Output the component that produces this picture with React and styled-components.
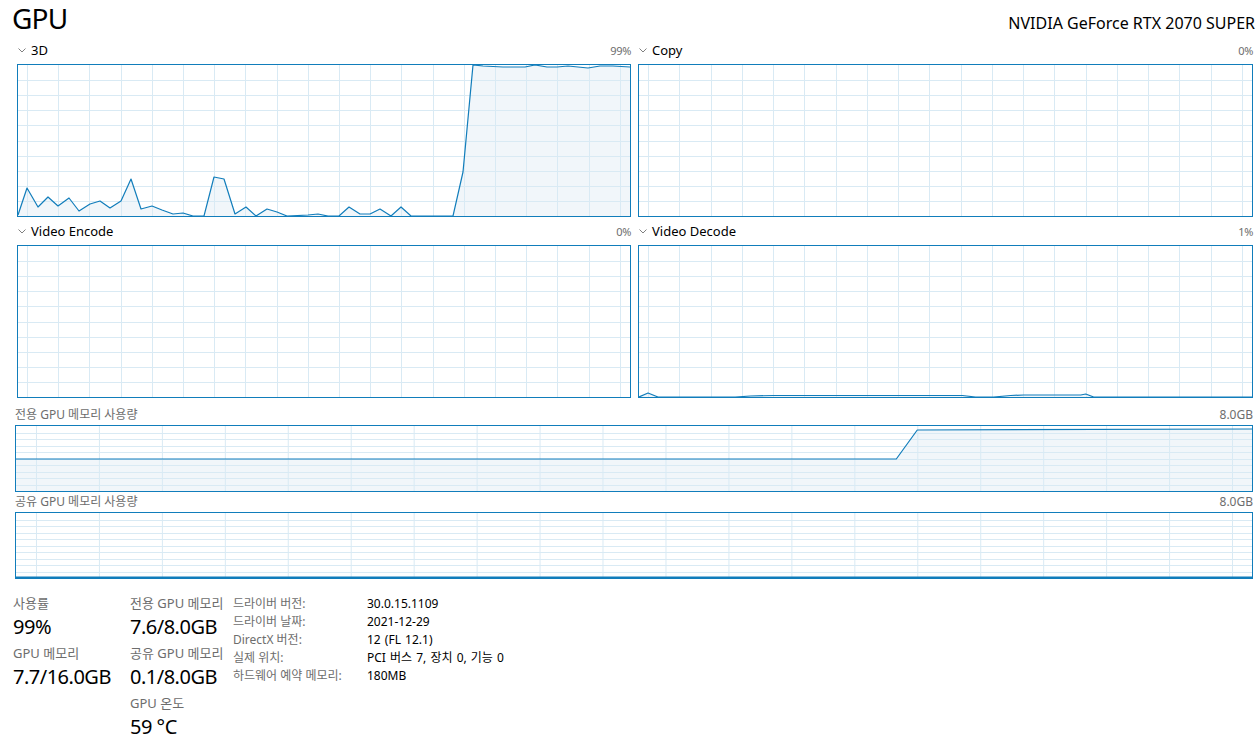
import React from 'react';
import styled, { createGlobalStyle } from 'styled-components';

const GlobalStyle = createGlobalStyle`
  html, body {
    margin: 0;
    padding: 0;
    background: #ffffff;
  }
  body {
    font-family: "Noto Sans", "Noto Sans CJK KR", sans-serif;
    color: #000;
  }
`;

const LINE = '#117dbb';
const GRID = '#d9eaf4';
const FILL = '#f1f6fa';

// chart data in local pixel coords of the inner plot area
const threeD = [
  [18, 215], [27, 188], [38, 207], [48, 197], [58, 206], [69, 198], [79, 211], [90, 204],
  [100, 201], [110, 208], [121, 201], [131, 179], [141, 209], [152, 206], [162, 210],
  [173, 214], [183, 213], [193, 216], [204, 216], [214, 177], [224, 179], [235, 214],
  [246, 207], [256, 216], [267, 209], [277, 212], [287, 216], [308, 215], [318, 214],
  [328, 216], [339, 216], [349, 207], [360, 214], [370, 214], [380, 209], [391, 216],
  [401, 207], [411, 216], [453, 216], [463, 172], [473, 65], [483, 66], [503, 67],
  [525, 67], [535, 65], [547, 67], [557, 67], [568, 66], [588, 68], [600, 66],
  [613, 66], [630, 67],
].map(([x, y]) => [x - 18, y - 65]);

const videoDecode = [
  [639, 397], [648, 393], [658, 397], [735, 397], [750, 396], [773, 395.5], [962, 395.5],
  [975, 397], [993, 397], [1010, 395.5], [1023, 395], [1080, 395], [1085, 394],
  [1093, 397], [1252, 397],
].map(([x, y]) => [x - 639, y - 246]);

const dedicated = [[0, 33], [881, 33], [902, 4], [1237, 3]];
const shared = [[0, 64.5], [1237, 64.5]];

const Page = styled.div`
  width: 1260px;
  height: 735px;
  overflow: hidden;
  box-sizing: border-box;
  padding: 0 6px 0 12px;
`;

const Header = styled.div`
  display: flex;
  justify-content: space-between;
  align-items: baseline;
  height: 41px;
`;

const Title = styled.h1`
  margin: 0;
  font-size: 28px;
  font-weight: 400;
  line-height: 36px;
  letter-spacing: -0.8px;
`;

const DeviceName = styled.div`
  font-size: 16px;
  letter-spacing: 0;
  margin-right: -1px;
`;

const EngineGrid = styled.div`
  display: grid;
  grid-template-columns: 614px 615px;
  column-gap: 7px;
  row-gap: 5px;
  margin-left: 5px;
`;

const LabelRow = styled.div`
  display: flex;
  justify-content: space-between;
  align-items: center;
  height: ${p => p.$h}px;
  margin-bottom: ${p => p.$gap}px;
`;

const EngineName = styled.div`
  display: flex;
  align-items: center;
  gap: 5px;
  font-size: 13px;
  color: #000;
  padding-left: 1px;
`;

const SmallValue = styled.span`
  font-size: 11px;
  color: #6d6d6d;
  letter-spacing: -0.3px;
`;

const MemLabel = styled.span`
  font-size: 12px;
  color: #6d6d6d;
`;

const ChartBox = styled.div`
  border: 1px solid ${LINE};
  height: ${p => p.$h}px;
  background: #fff;
  svg {
    display: block;
    width: 100%;
    height: 100%;
  }
`;

const MemSection = styled.div`
  margin: 8px 1px 0 3px;
`;

const MemBlock = styled.div`
  margin-bottom: 1px;
`;

const Stats = styled.div`
  display: flex;
  margin-top: 15px;
  margin-left: 1px;
`;

const StatCol = styled.div`
  width: ${p => p.$w}px;
`;

const Stat = styled.div`
  margin-bottom: 2px;
`;

const StatLabel = styled.div`
  font-size: 13px;
  line-height: 18px;
  color: #6d6d6d;
`;

const StatValue = styled.div`
  font-size: 20px;
  line-height: 30px;
  color: #000;
  letter-spacing: -0.5px;
`;

const InfoTable = styled.div`
  display: grid;
  grid-template-columns: 134px auto;
  grid-auto-rows: 18px;
  align-items: center;
  font-size: 12px;
`;

const InfoKey = styled.span`
  color: #6d6d6d;
`;

const InfoVal = styled.span`
  color: #000;
  word-spacing: 1px;
`;

const Chevron = () => (
  <svg width="8" height="5" viewBox="0 0 8 5">
    <polyline points="0.5,0.5 4,4 7.5,0.5" fill="none" stroke="#808080" strokeWidth="1" />
  </svg>
);

const Plot = ({ w, h, cols, offset, data, thick }) => {
  const vLines = [];
  for (let x = offset; x < w; x += cols) vLines.push(x);
  const hLines = [];
  for (let i = 1; i < 10; i++) hLines.push((h / 10) * i);
  const line = data ? data.map(p => p.join(',')).join(' ') : null;
  const area = data ? `0,${h} ${line} ${w},${h}` : null;
  return (
    <svg viewBox={`0 0 ${w} ${h}`} preserveAspectRatio="none" shapeRendering="crispEdges">
      {area && <polygon points={area} fill={FILL} stroke="none" />}
      {vLines.map(x => (
        <line key={'v' + x} x1={x + 0.5} x2={x + 0.5} y1={0} y2={h} stroke={GRID} strokeWidth="1" />
      ))}
      {hLines.map(y => (
        <line key={'h' + y} x1={0} x2={w} y1={Math.round(y) + 0.5} y2={Math.round(y) + 0.5} stroke={GRID} strokeWidth="1" />
      ))}
      {line && (
        <polyline points={line} fill="none" stroke={LINE} strokeWidth={thick || 1.2} shapeRendering="auto" strokeLinejoin="round" />
      )}
    </svg>
  );
};

const engines = [
  { name: '3D', value: '99%', data: threeD },
  { name: 'Copy', value: '0%' },
  { name: 'Video Encode', value: '0%' },
  { name: 'Video Decode', value: '1%', data: videoDecode },
];

const App = () => {
  return (
    <Page>
      <GlobalStyle />
      <Header>
        <Title>GPU</Title>
        <DeviceName>NVIDIA GeForce RTX 2070 SUPER</DeviceName>
      </Header>

      <EngineGrid>
        {engines.map(e => (
          <div key={e.name}>
            <LabelRow $h={18} $gap={5}>
              <EngineName>
                <Chevron />
                {e.name}
              </EngineName>
              <SmallValue>{e.value}</SmallValue>
            </LabelRow>
            <ChartBox $h={151}>
              <Plot w={612} h={151} cols={31.2} offset={9} data={e.data} />
            </ChartBox>
          </div>
        ))}
      </EngineGrid>

      <MemSection>
        <MemBlock>
          <LabelRow $h={16} $gap={3}>
            <MemLabel>전용 GPU 메모리 사용량</MemLabel>
            <MemLabel>8.0GB</MemLabel>
          </LabelRow>
          <ChartBox $h={65}>
            <Plot w={1237} h={65} cols={63} offset={20} data={dedicated} />
          </ChartBox>
        </MemBlock>
        <MemBlock>
          <LabelRow $h={16} $gap={3}>
            <MemLabel>공유 GPU 메모리 사용량</MemLabel>
            <MemLabel>8.0GB</MemLabel>
          </LabelRow>
          <ChartBox $h={65}>
            <Plot w={1237} h={65} cols={63} offset={20} data={shared} thick={2} />
          </ChartBox>
        </MemBlock>
      </MemSection>

      <Stats>
        <StatCol $w={117}>
          <Stat>
            <StatLabel>사용률</StatLabel>
            <StatValue>99%</StatValue>
          </Stat>
          <Stat>
            <StatLabel>GPU 메모리</StatLabel>
            <StatValue>7.7/16.0GB</StatValue>
          </Stat>
        </StatCol>
        <StatCol $w={103}>
          <Stat>
            <StatLabel>전용 GPU 메모리</StatLabel>
            <StatValue>7.6/8.0GB</StatValue>
          </Stat>
          <Stat>
            <StatLabel>공유 GPU 메모리</StatLabel>
            <StatValue>0.1/8.0GB</StatValue>
          </Stat>
          <Stat>
            <StatLabel>GPU 온도</StatLabel>
            <StatValue>59 °C</StatValue>
          </Stat>
        </StatCol>
        <InfoTable>
          <InfoKey>드라이버 버전:</InfoKey>
          <InfoVal>30.0.15.1109</InfoVal>
          <InfoKey>드라이버 날짜:</InfoKey>
          <InfoVal>2021-12-29</InfoVal>
          <InfoKey>DirectX 버전:</InfoKey>
          <InfoVal>12 (FL 12.1)</InfoVal>
          <InfoKey>실제 위치:</InfoKey>
          <InfoVal>PCI 버스 7, 장치 0, 기능 0</InfoVal>
          <InfoKey>하드웨어 예약 메모리:</InfoKey>
          <InfoVal>180MB</InfoVal>
        </InfoTable>
      </Stats>
    </Page>
  );
};

export default App;
